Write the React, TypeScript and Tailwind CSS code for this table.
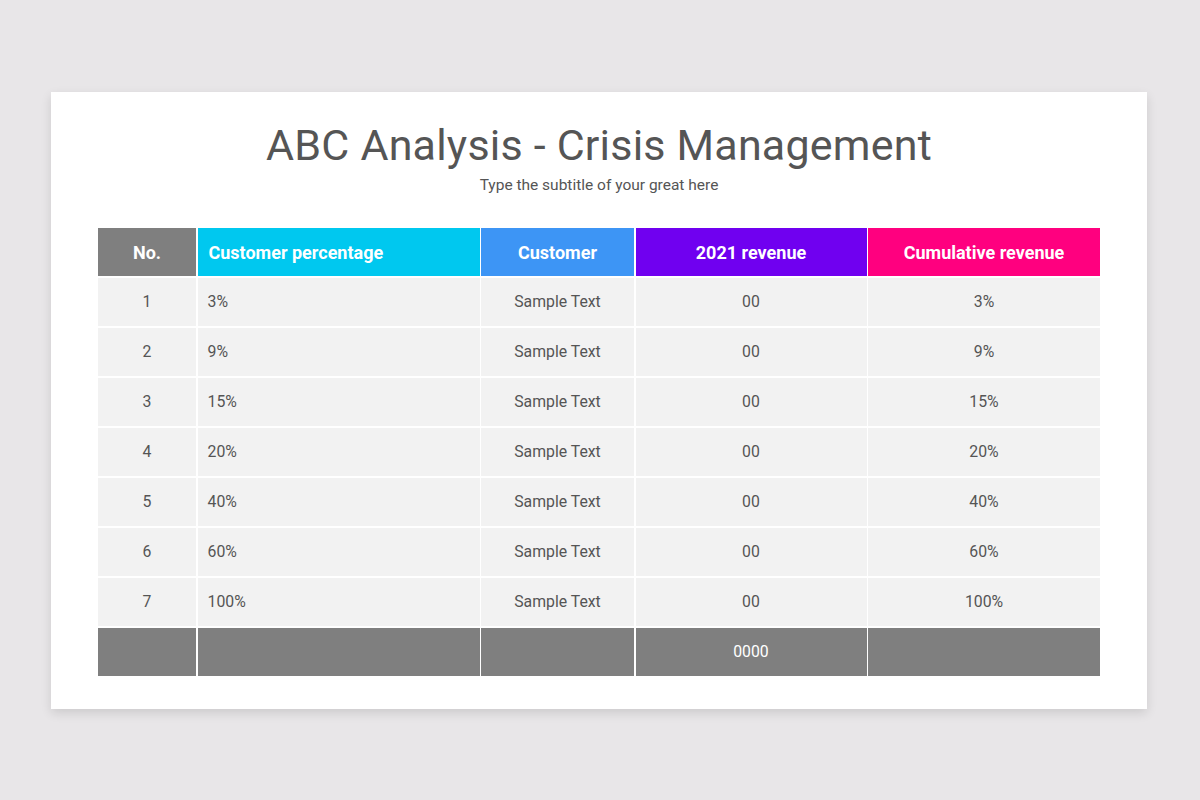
import React from "react";

const rows = [
  ["1", "3%", "Sample Text", "00", "3%"],
  ["2", "9%", "Sample Text", "00", "9%"],
  ["3", "15%", "Sample Text", "00", "15%"],
  ["4", "20%", "Sample Text", "00", "20%"],
  ["5", "40%", "Sample Text", "00", "40%"],
  ["6", "60%", "Sample Text", "00", "60%"],
  ["7", "100%", "Sample Text", "00", "100%"],
];

export default function App() {
  return (
    <div
      className="w-[1200px] h-[800px] bg-[#e8e6e8] pt-[92px] pl-[51px]"
      style={{ fontFamily: "Roboto, 'Liberation Sans', sans-serif" }}
    >
      <div className="w-[1096px] h-[617px] bg-white shadow-[0_4px_10px_rgba(0,0,0,0.12)] flex flex-col items-center">
        <h1 className="mt-[28px] text-[43px] leading-[50px] text-[#555555] font-normal tracking-[0.2px]">
          ABC Analysis - Crisis Management
        </h1>
        <p className="mt-[5px] text-[15.5px] leading-[20px] text-[#555555]">
          Type the subtitle of your great here
        </p>
        <div className="mt-[33px] grid grid-cols-[98px_282px_153px_231px_232px] gap-[1.5px] bg-white">
          <div className="h-12 bg-[#7f7f7f] text-white font-bold text-[18px] flex items-center justify-center">No.</div>
          <div className="h-12 bg-[#00c8ef] text-white font-bold text-[18px] flex items-center pl-[11px]">Customer percentage</div>
          <div className="h-12 bg-[#3d95f5] text-white font-bold text-[18px] flex items-center justify-center">Customer</div>
          <div className="h-12 bg-[#7000f0] text-white font-bold text-[18px] flex items-center justify-center">2021 revenue</div>
          <div className="h-12 bg-[#ff007f] text-white font-bold text-[18px] flex items-center justify-center">Cumulative revenue</div>
          {rows.map((r) => (
            <React.Fragment key={r[0]}>
              <div className="h-[48.5px] bg-[#f2f2f2] text-[#555555] text-[15.8px] flex items-center justify-center">{r[0]}</div>
              <div className="h-[48.5px] bg-[#f2f2f2] text-[#555555] text-[15.8px] flex items-center pl-[10px]">{r[1]}</div>
              <div className="h-[48.5px] bg-[#f2f2f2] text-[#555555] text-[15.8px] flex items-center justify-center">{r[2]}</div>
              <div className="h-[48.5px] bg-[#f2f2f2] text-[#555555] text-[15.8px] flex items-center justify-center">{r[3]}</div>
              <div className="h-[48.5px] bg-[#f2f2f2] text-[#555555] text-[15.8px] flex items-center justify-center">{r[4]}</div>
            </React.Fragment>
          ))}
          <div className="h-12 bg-[#7f7f7f]" />
          <div className="h-12 bg-[#7f7f7f]" />
          <div className="h-12 bg-[#7f7f7f]" />
          <div className="h-12 bg-[#7f7f7f] text-white text-[15.8px] flex items-center justify-center">0000</div>
          <div className="h-12 bg-[#7f7f7f]" />
        </div>
      </div>
    </div>
  );
}
